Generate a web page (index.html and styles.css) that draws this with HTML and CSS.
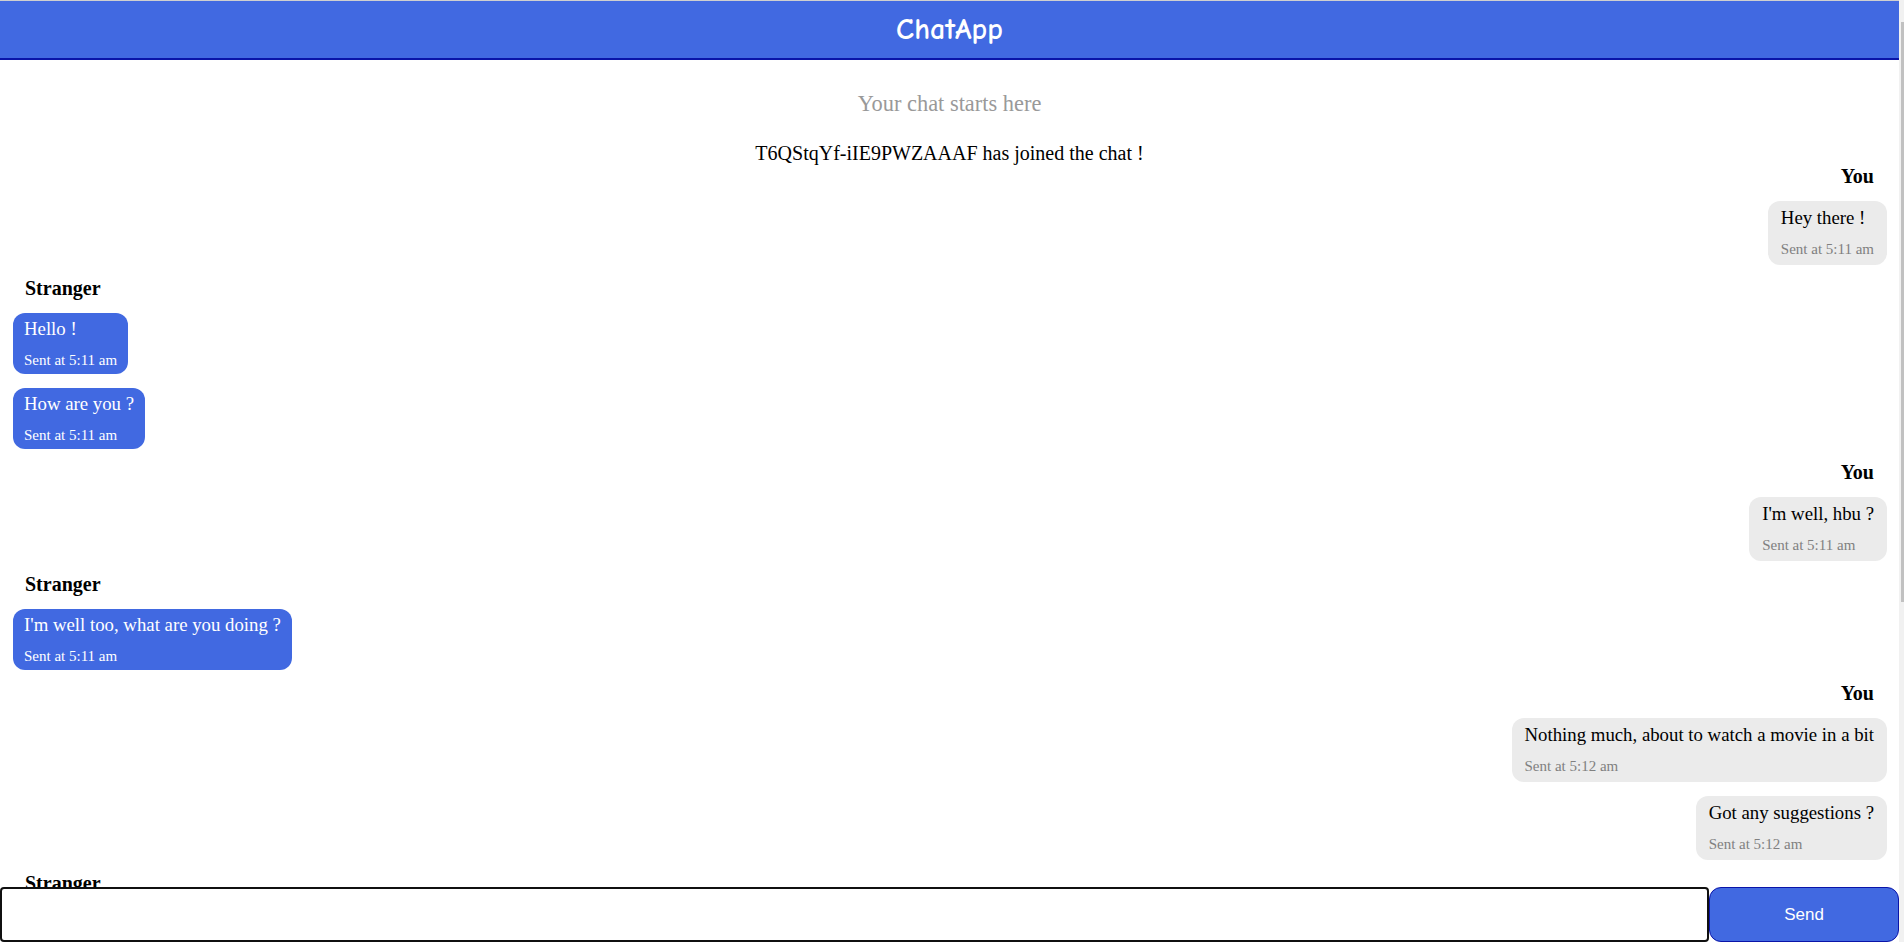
FILE: index.html
```html
<!DOCTYPE html>
<html lang="en">
<head>
<meta charset="utf-8">
<title>ChatApp</title>
<link rel="stylesheet" href="styles.css">
</head>
<body>
<header class="header">
  <h1 class="title">ChatApp</h1>
</header>
<main class="chat">
  <p class="intro">Your chat starts here</p>
  <p class="notice">T6QStqYf-iIE9PWZAAAF has joined the chat !</p>

  <section class="group group-you">
    <div class="sender">You</div>
    <div class="bubble bubble-you"><p class="text">Hey there !</p><p class="time">Sent at 5:11 am</p></div>
  </section>

  <section class="group group-stranger">
    <div class="sender">Stranger</div>
    <div class="bubble bubble-stranger"><p class="text">Hello !</p><p class="time">Sent at 5:11 am</p></div>
    <div class="bubble bubble-stranger"><p class="text">How are you ?</p><p class="time">Sent at 5:11 am</p></div>
  </section>

  <section class="group group-you">
    <div class="sender">You</div>
    <div class="bubble bubble-you"><p class="text">I'm well, hbu ?</p><p class="time">Sent at 5:11 am</p></div>
  </section>

  <section class="group group-stranger">
    <div class="sender">Stranger</div>
    <div class="bubble bubble-stranger"><p class="text">I'm well too, what are you doing ?</p><p class="time">Sent at 5:11 am</p></div>
  </section>

  <section class="group group-you">
    <div class="sender">You</div>
    <div class="bubble bubble-you"><p class="text">Nothing much, about to watch a movie in a bit</p><p class="time">Sent at 5:12 am</p></div>
    <div class="bubble bubble-you"><p class="text">Got any suggestions ?</p><p class="time">Sent at 5:12 am</p></div>
  </section>

  <section class="group group-stranger">
    <div class="sender">Stranger</div>
  </section>
</main>
<form class="composer" onsubmit="return false;">
  <input class="input" type="text" autofocus>
  <button class="send" type="submit">Send</button>
</form>
<div class="scrollbar" aria-hidden="true"><div class="scrollbar-thumb"></div></div>
</body>
</html>
```

FILE: styles.css
```css
body {
  margin: 0 5px 0 0;
  font-family: "Liberation Serif", "Times New Roman", serif;
  color: #000;
  background: #fff;
}

.header {
  height: 57px;
  border-top: 1px solid #cfcfcf;
  border-bottom: 2px solid #0a14a8;
  background: #4169e1;
  display: flex;
  align-items: center;
  justify-content: center;
}

.title {
  margin: 0;
  font-family: "Comic Sans MS", "Comic Neue", "Open Sans", sans-serif;
  font-size: 30px;
  font-weight: 700;
  color: #fff;
}

.chat {
  display: flex;
  flex-direction: column;
  padding-bottom: 80px;
}

.intro {
  margin: 31px 0 25px;
  text-align: center;
  font-size: 22.4px;
  color: #999;
}

.notice {
  margin: 0;
  text-align: center;
  font-size: 20px;
}

.group {
  display: flex;
  flex-direction: column;
  margin-bottom: 5px;
}
.group-you {
  align-items: flex-end;
}
.group-stranger {
  align-items: flex-start;
}

.sender {
  margin: 0 25px 6px;
  font-size: 20px;
  font-weight: bold;
}

.bubble {
  margin: 7px 12px 7px 13px;
  border-radius: 12px;
}
.bubble-you {
  background: #ebebeb;
  padding: 6px 13px 7px;
}
.bubble-stranger {
  background: #4169e1;
  color: #fff;
  padding: 5px 11px;
}

.text {
  margin: 0;
  font-size: 18.8px;
}
.time {
  margin: 12px 0 0;
  font-size: 15px;
  color: #808080;
}
.bubble-stranger .time {
  color: #fff;
}

.composer {
  position: fixed;
  left: 0;
  right: 5px;
  bottom: 0;
  height: 55px;
  margin: 0;
  display: flex;
}

.input {
  flex: 0 0 90%;
  box-sizing: border-box;
  margin: 0;
  padding: 1px 2px;
  border: 2px solid #101010;
  border-radius: 4px;
  font-family: "Liberation Serif", serif;
  font-size: 24px;
  outline: none;
}

.send {
  flex: 1;
  margin: 0;
  border: 1px solid #0a14a8;
  border-radius: 12px;
  background: #4169e1;
  color: #fff;
  font-family: "Liberation Sans", Arial, sans-serif;
  font-size: 17px;
}

.scrollbar {
  position: fixed;
  top: 0;
  right: 0;
  bottom: 0;
  width: 5px;
  background: #f1f1f1;
}
.scrollbar-thumb {
  margin: 22px 0 0 2px;
  height: 580px;
  background: #c1c1c1;
}
```
